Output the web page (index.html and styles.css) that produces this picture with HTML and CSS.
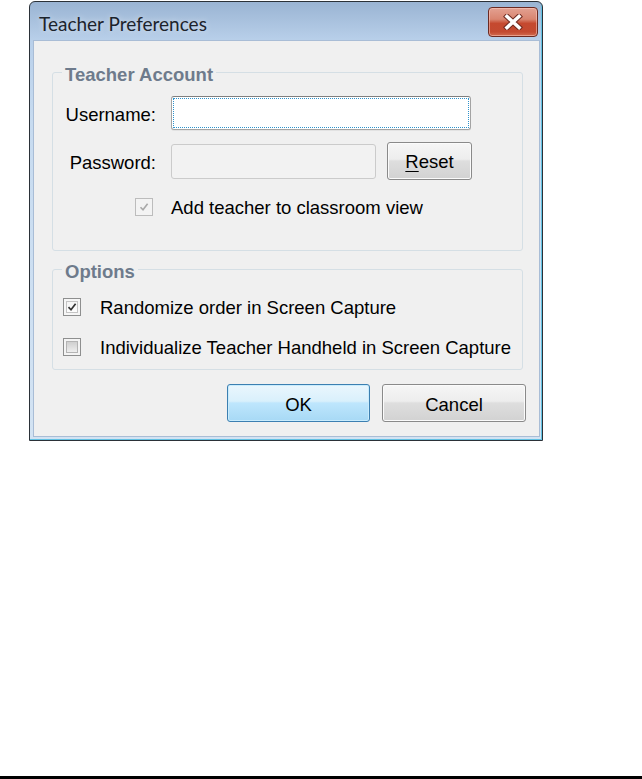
FILE: index.html
```html
<!DOCTYPE html>
<html>
<head>
<meta charset="utf-8">
<title>Teacher Preferences</title>
<link rel="stylesheet" href="styles.css">
</head>
<body>
<div class="page">
  <div class="window">
    <div class="titlebar">
      <span class="title">Teacher Preferences</span>
      <span class="close">
        <svg width="20" height="16" viewBox="0 0 20 16">
          <path d="M4 2.5 L16 13.5 M16 2.5 L4 13.5" stroke="#6e2a20" stroke-width="5.6" stroke-linecap="square" fill="none"/>
          <path d="M4 2.5 L16 13.5 M16 2.5 L4 13.5" stroke="#ffffff" stroke-width="3.6" stroke-linecap="square" fill="none"/>
        </svg>
      </span>
    </div>
    <div class="client">
      <fieldset class="group group-account">
        <legend class="legend">Teacher Account</legend>
        <div class="field-row row-user">
          <span class="lbl">Username:</span>
          <span class="textbox textbox-focused"></span>
        </div>
        <div class="field-row row-pass">
          <span class="lbl">Password:</span>
          <span class="textbox textbox-disabled"></span>
          <span class="btn btn-reset"><span class="ul">R</span>eset</span>
        </div>
        <div class="check-row row-add">
          <span class="cb cb-disabled">
            <svg width="10" height="10" viewBox="0 0 10 10"><path d="M1.5 5.2 L4 7.8 L8.6 1.8" stroke="#a9a9a9" stroke-width="1.6" fill="none"/></svg>
          </span>
          <span class="cb-text">Add teacher to classroom view</span>
        </div>
      </fieldset>
      <fieldset class="group group-options">
        <legend class="legend">Options</legend>
        <div class="check-row row-random">
          <span class="cb cb-checked">
            <svg width="10" height="10" viewBox="0 0 10 10"><path d="M1.5 5.2 L4 7.8 L8.6 1.8" stroke="#333333" stroke-width="1.7" fill="none"/></svg>
          </span>
          <span class="cb-text">Randomize order in Screen Capture</span>
        </div>
        <div class="check-row row-indiv">
          <span class="cb cb-unchecked"><span class="cb-fill"></span></span>
          <span class="cb-text">Individualize Teacher Handheld in Screen Capture</span>
        </div>
      </fieldset>
      <div class="actions">
        <span class="btn btn-default btn-ok">OK</span>
        <span class="btn btn-cancel">Cancel</span>
      </div>
    </div>
  </div>
  <div class="bottom-rule"></div>
</div>
</body>
</html>
```

FILE: styles.css
```css
html, body {
  margin: 0;
  padding: 0;
  background: #ffffff;
}

.page {
  height: 779px;
  display: flex;
  flex-direction: column;
  font-family: "Liberation Sans", Arial, sans-serif;
  font-size: 18.5px;
  color: #000;
}

.window {
  margin: 1px 0 0 29px;
  width: 514px;
  height: 440px;
  box-sizing: border-box;
  border: 1px solid #2b3138;
  border-radius: 6px 6px 0 0;
  background: linear-gradient(to bottom, #9ab4d3 0px, #b9d0ea 39px, #c7dbf0 120px, #d3e3f3 100%);
  display: flex;
  flex-direction: column;
  box-shadow: inset -1px -1px 0 #62c1e2;
}

.titlebar {
  height: 39px;
  display: flex;
  align-items: flex-start;
  justify-content: space-between;
  padding: 0 4px 0 9px;
}

.title {
  font-family: Lato, "Liberation Sans", sans-serif;
  font-size: 19px;
  line-height: 39px;
  padding-top: 2px;
  color: #1c232c;
  text-shadow: 0 0 6px rgba(255,255,255,0.6);
}

.close {
  margin-top: 5px;
  width: 50px;
  height: 30px;
  box-sizing: border-box;
  border: 1px solid #6b2a22;
  border-radius: 4px;
  background: linear-gradient(to bottom, #e3a191 0%, #d98570 40%, #c5492f 55%, #c34a31 85%, #d26c50 100%);
  box-shadow: inset 0 0 0 1px rgba(255,210,200,0.5);
  display: flex;
  align-items: center;
  justify-content: center;
}

.client {
  margin: 0 3px 0 4px;
  width: 505px;
  height: 395px;
  background: #f0f0f0;
  box-shadow: 0 0 0 1px #a9bdd6;
  display: flex;
  flex-direction: column;
  padding-top: 19px;
  box-sizing: border-box;
}

.group {
  margin: 0 16px 0 18px;
  padding: 0;
  border: 1px solid #d5dfe5;
  border-radius: 3px;
  min-width: 0;
}

.legend {
  margin-left: 9px;
  padding: 5px 3px 0;
  font-weight: bold;
  font-size: 18.5px;
  line-height: 19px;
  color: #6e7b8c;
}

.group-account {
  padding-bottom: 32px;
}

.group-options {
  margin-top: 6px;
  padding-bottom: 11px;
}

.field-row {
  display: flex;
  align-items: center;
}

.row-user {
  margin-top: 12px;
  height: 34px;
}

.row-pass {
  margin-top: 12px;
  height: 38px;
}

.lbl {
  width: 103px;
  margin-right: 15px;
  text-align: right;
  padding-top: 3px;
}

.textbox {
  display: block;
  box-sizing: border-box;
  border-radius: 3px;
  position: relative;
}

.textbox-focused {
  width: 300px;
  height: 34px;
  background: #ffffff;
  border: 1px solid #a3a3a3;
  border-top-color: #7f7f7f;
  box-shadow: 0 1px 0 #e2e2e2;
}

.textbox-focused::after {
  content: "";
  position: absolute;
  left: 1px;
  top: 1px;
  right: 1px;
  bottom: 1px;
  border: 1px dotted #2f93cc;
}

.textbox-disabled {
  width: 205px;
  height: 35px;
  background: #f2f2f2;
  border: 1px solid #cbcbcb;
}

.btn {
  display: flex;
  align-items: center;
  justify-content: center;
  box-sizing: border-box;
  height: 38px;
  border: 1px solid #8a8a8a;
  border-radius: 3px;
  background: linear-gradient(to bottom, #f6f6f6 0%, #ededed 45%, #dedede 50%, #d2d2d2 100%);
  box-shadow: inset 0 0 0 1px #fbfbfb;
  color: #000;
  line-height: 20px;
  padding-top: 3px;
}

.btn-reset {
  width: 85px;
  margin-left: 11px;
  padding-top: 1px;
}

.ul {
  text-decoration: underline;
  text-underline-offset: 3px;
}

.check-row {
  display: flex;
  align-items: center;
  height: 22px;
}

.cb-text {
  padding-top: 2px;
}

.row-add {
  margin-top: 16px;
  padding-left: 82px;
}

.row-random {
  margin-top: 15px;
  padding-left: 10px;
}

.row-indiv {
  margin-top: 18px;
  padding-left: 10px;
}

.cb {
  width: 18px;
  height: 18px;
  box-sizing: border-box;
  border: 1px solid #8e8f8f;
  background: #f4f4f4;
  display: flex;
  align-items: center;
  justify-content: center;
  flex: none;
}

.cb-disabled {
  border-color: #bcbcbc;
  background: #f3f3f3;
}

.cb-checked {
  background: linear-gradient(to bottom, #f2f2f2, #ffffff);
  box-shadow: inset 0 0 0 2px #f6f6f6, inset 0 0 0 3px #c4c4c4;
}

.cb-fill {
  width: 12px;
  height: 12px;
  box-sizing: border-box;
  border: 1px solid #b4b4b4;
  background: linear-gradient(to bottom, #cfcfcf, #eeeeee);
}

.row-add .cb-text {
  margin-left: 18px;
}

.row-random .cb-text,
.row-indiv .cb-text {
  margin-left: 19px;
}

.actions {
  margin-top: 14px;
  display: flex;
  justify-content: flex-end;
  gap: 12px;
  padding-right: 13px;
}

.btn-ok {
  width: 143px;
}

.btn-cancel {
  width: 144px;
}

.btn-default {
  border-color: #3c7fb1;
  background: linear-gradient(to bottom, #eaf6fd 0%, #d9f0fc 45%, #bee6fd 50%, #a7d9f5 100%);
  box-shadow: inset 0 0 0 1px #c9ecfd;
}

.bottom-rule {
  margin-top: auto;
  height: 3px;
  background: #000;
}
```
